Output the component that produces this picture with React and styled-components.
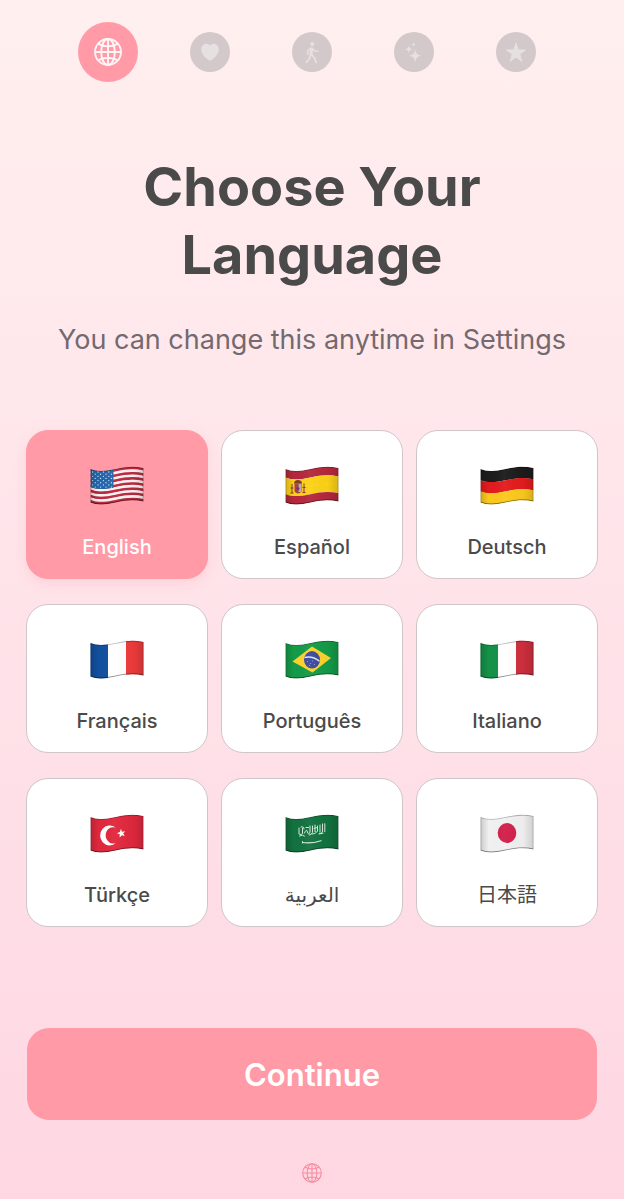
// App.jsx
import React, { useId, useState } from 'react';
import styled, { createGlobalStyle } from 'styled-components';

const GlobalStyle = createGlobalStyle`
  * {
    box-sizing: border-box;
  }

  body {
    margin: 0;
    font-family: Inter, 'Liberation Sans', 'DejaVu Sans', 'Noto Sans CJK JP', sans-serif;
    color: #4a4a4a;
  }

  button {
    font-family: inherit;
    cursor: pointer;
  }
`;

const Page = styled.main`
  min-height: 100vh;
  display: flex;
  flex-direction: column;
  padding-top: 22px;
  background: linear-gradient(180deg, #ffefef 0%, #fed7e3 100%);
`;

const Steps = styled.ol`
  display: flex;
  justify-content: center;
  gap: 42px;
  margin: 0;
  padding: 0;
  list-style: none;
`;

const Step = styled.li`
  width: 60px;
  height: 60px;
  display: flex;
  align-items: center;
  justify-content: center;
`;

const StepDot = styled.div`
  width: ${({ $active }) => ($active ? 60 : 40)}px;
  height: ${({ $active }) => ($active ? 60 : 40)}px;
  display: flex;
  align-items: center;
  justify-content: center;
  border-radius: 50%;
  background: ${({ $active }) => ($active ? '#ff9aa6' : '#d3c9ca')};
  color: ${({ $active }) => ($active ? '#fff5f6' : '#e6e0e2')};
`;

const Header = styled.header`
  padding: 0 48px;
  margin-top: 71px;
  text-align: center;
`;

const Title = styled.h1`
  max-width: 420px;
  margin: 0 auto;
  font-size: 54px;
  line-height: 68px;
  font-weight: 700;
`;

const Subtitle = styled.p`
  margin: 34px 0 0;
  font-size: 27px;
  line-height: 34px;
  color: #74696f;
`;

const Languages = styled.div`
  display: grid;
  grid-template-columns: repeat(3, 1fr);
  gap: 25px 13px;
  margin-top: 73px;
  padding: 0 26px;
`;

const LanguageCard = styled.button`
  height: 149px;
  display: flex;
  flex-direction: column;
  align-items: center;
  gap: 27px;
  padding: 35px 0 0;
  border: 1px solid ${({ $selected }) => ($selected ? '#ff9aa6' : '#d0c5c9')};
  border-radius: 22px;
  background: ${({ $selected }) => ($selected ? '#ff9aa6' : '#ffffff')};
  color: ${({ $selected }) => ($selected ? '#ffffff' : '#4a4a4a')};
  box-shadow: ${({ $selected }) => ($selected ? '0 4px 12px rgba(255, 154, 166, 0.25)' : 'none')};
`;

const LanguageName = styled.span`
  font-size: 20px;
  line-height: 28px;
  font-weight: 500;

  &:lang(ja) {
    font-weight: 400;
  }
`;

const Footer = styled.footer`
  display: flex;
  flex-direction: column;
  align-items: center;
  gap: 43px;
  margin-top: auto;
  padding: 48px 27px 16px;
`;

const ContinueButton = styled.button`
  width: 100%;
  height: 92px;
  border: none;
  border-radius: 22px;
  background: #ff9aa6;
  color: #ffffff;
  font-size: 31px;
  font-weight: 600;
`;

const PageMark = styled.div`
  display: flex;
  color: #f58c9e;
`;

const GlobeIcon = ({ size, stroke }) => (
  <svg width={size} height={size} viewBox="0 0 28 28" fill="none" stroke="currentColor" strokeWidth={stroke} aria-hidden="true">
    <circle cx="14" cy="14" r="13" />
    <ellipse cx="14" cy="14" rx="6.8" ry="13" />
    <path d="M14 1v26M1 14h26M4 5.600c5.600 3.600 14.400 3.600 20 0M4 22.400c5.600-3.600 14.400-3.600 20 0" />
  </svg>
);

const HeartIcon = () => (
  <svg width="40" height="40" viewBox="0 0 40 40" fill="currentColor" aria-hidden="true">
    <path d="M20 28.8c-.4 0-.8-.2-1.200-.5C14 25 11.200 21.300 11.200 17.300c0-3.300 2.200-5.600 5-5.600 1.700 0 3 .9 3.800 2.300.8-1.400 2.200-2.300 3.800-2.300 2.800 0 5 2.300 5 5.600 0 4-2.900 7.700-7.600 11-.4.300-.8.500-1.200.5z" />
  </svg>
);

const WalkIcon = () => (
  <svg width="40" height="40" viewBox="0 0 40 40" fill="none" stroke="currentColor" strokeLinecap="round" strokeLinejoin="round" aria-hidden="true">
    <circle cx="20.200" cy="12" r="2.100" fill="currentColor" stroke="none" />
    <path d="M19.600 17l-.6 5.600" strokeWidth="3.400" />
    <path d="M18.600 16.300l-2.500 2-.6 4M20.600 16.500l2.200 2.500 3.200.3" strokeWidth="1.400" />
    <path d="M18.500 23l-1 3.400-3 4M20 23l2.600 3.300 1.500 4.200" strokeWidth="1.700" />
  </svg>
);

const SparklesIcon = () => (
  <svg width="40" height="40" viewBox="0 0 40 40" fill="currentColor" aria-hidden="true">
    <path d="M21.200 17.300c.8 4.400 1.900 5.500 6.300 6.400-4.400.9-5.500 2-6.300 6.400-.8-4.400-1.900-5.500-6.300-6.400 4.400-.9 5.500-2 6.300-6.400z" />
    <path d="M14.800 13.500c.5 2.700 1.200 3.300 3.800 3.800-2.600.5-3.300 1.100-3.800 3.800-.5-2.700-1.200-3.300-3.800-3.800 2.600-.5 3.300-1.100 3.800-3.800z" />
    <path d="M19.500 10.100c.3 1.600.7 2 2.300 2.300-1.600.3-2 .7-2.300 2.300-.3-1.600-.7-2-2.300-2.300 1.600-.3 2-.7 2.300-2.300z" />
  </svg>
);

const StarIcon = () => (
  <svg width="40" height="40" viewBox="0 0 40 40" fill="currentColor" stroke="currentColor" strokeLinejoin="round" aria-hidden="true">
    <path d="M20 11l2.300 6.900 7.200.1-5.800 4.300 2.200 7-5.900-4.200-5.900 4.200 2.200-7-5.800-4.300 7.200-.1z" />
  </svg>
);

// the top and bottom edge of every flag follow the same wave
const band = (top, bottom) =>
  `M.5 ${top} c6 2.500 14 2.500 25 0 c11 -2.500 19 -3 28 -1 V${bottom - 1} c-9 -2 -17 -1.500 -28 1 c-11 2.500 -19 2.500 -25 0 Z`;

const TOP = 3;
const BOTTOM = 36.5;
const HEIGHT = BOTTOM - TOP;

const Rows = ({ colors }) => {
  const size = HEIGHT / colors.length;
  return colors.map((color, i) => (
    <path key={i} d={band(TOP + i * size, TOP + (i + 1) * size + 0.2)} fill={color} />
  ));
};

const Columns = ({ colors }) =>
  colors.map((color, i) => <rect key={color} x={i * 18} y="0" width="18.100" height="39" fill={color} />);

const stripes = Array.from({ length: 13 }, (_, i) => (i % 2 ? '#fbf3f4' : '#b92a40'));
const stars = Array.from({ length: 32 }, (_, i) => {
  const row = Math.floor(i / 4);
  return { x: 2.6 + (i % 4) * 5.4 + (row % 2) * 2.6, y: 6 + row * 2.150 };
});

const flagArt = {
  us: (
    <>
      <Rows colors={stripes} />
      <path d="M.5 3c6 2.500 13 2.500 23 .5v18.200c-10 2-17 1.800-23-.7z" fill="#2467ad" />
      {stars.map(({ x, y }) => (
        <circle key={`${x}-${y}`} cx={x} cy={y} r=".65" fill="#d4e7f7" />
      ))}
    </>
  ),
  es: (
    <>
      <Rows colors={['#b5283c', '#fcd116', '#fcd116', '#b5283c']} />
      <path d="M9.500 17.500h7v8q-3.500 4-7 0z" fill="#a9443d" />
      <path d="M14.800 18v8" stroke="#c9a7c4" strokeWidth="2.400" />
      <path d="M9 17.500q0-3.500 4-3.500t4 3.500z" fill="#7d4029" />
      <path d="M7 18v9M19 17.500v9" stroke="#a05c35" strokeWidth="1.300" />
      <path d="M5.500 22h3M5.500 27h3M17.500 21.500h3M17.500 26.500h3" stroke="#8d3038" strokeWidth="1.100" />
      <circle cx="13" cy="22.500" r="1.500" fill="#584280" />
    </>
  ),
  de: <Rows colors={['#1c1c1c', '#e31b1d', '#fbc91d']} />,
  fr: <Columns colors={['#12509e', '#ffffff', '#ee3b3c']} />,
  br: (
    <>
      <Rows colors={['#149b48']} />
      <path d="M7.500 21.500L27 6.500l19 11.500-18.500 14.500z" fill="#fcd22c" />
      <ellipse cx="27" cy="19.800" rx="8" ry="8.700" fill="#3c4a9c" />
      <path d="M19.400 17.500q8-2 15 3.700" fill="none" stroke="#dce6ec" strokeWidth="1.500" />
      <path d="M22 21.500h1M25 23.500h1M29 24.500h1M27 21h1M24 25.500h1" stroke="#a5afd8" strokeWidth=".8" />
    </>
  ),
  it: <Columns colors={['#149247', '#ffffff', '#cf2f3e']} />,
  tr: (
    <>
      <Rows colors={['#e0283d']} />
      <path d="M25.500 13.500a9.600 10 0 1 0 .5 15.500a7.600 8.200 0 1 1-.5-15.500z" fill="#ffffff" />
      <path d="M31 14.800l.9 3 3.300-.6-2 2.300 1.600 2.600-2.900-.9-2.300 2.400.1-3.300-2.900-1.100 3-1.300z" fill="#ffffff" />
    </>
  ),
  sa: (
    <>
      <Rows colors={['#12723f']} />
      <g fill="none" stroke="#d5e9dc" strokeWidth="1" strokeLinecap="round">
        <path d="M14 14v6q2 1.500 3.500-.5v-5M16 13q3-1 3 2M19.500 19q2-5 3-1t2.500 0v-6M21 13.500h2.500M27.500 12v6.500q-1 2-3 2.500M30 11v7q2 1 2.500-1v-5M35 11v7M37.500 10v8q-1.500 2-3 1.500M39.800 9.700v8M14.500 22q3-2 5 0M29 14.500l3-1M34 20l4-.8M27 20l3-.5" />
        <path d="M17.500 28.500q8 1.500 18.500-1.800" strokeWidth="1.200" />
        <path d="M17.500 27.500v1.600" />
      </g>
    </>
  ),
  jp: (
    <>
      <Rows colors={['#f1f1f2']} />
      <ellipse cx="27" cy="19" rx="9.300" ry="10" fill="#d21f4b" />
    </>
  ),
};

const Flag = ({ code }) => {
  const id = useId();
  const outline = band(TOP, BOTTOM);
  return (
    <svg width="54" height="40" viewBox="0 0 54 40" aria-hidden="true">
      <defs>
        <clipPath id={`${id}clip`}>
          <path d={outline} />
        </clipPath>
        <linearGradient id={`${id}shade`}>
          <stop offset="0" stopColor="#000" stopOpacity=".16" />
          <stop offset=".16" stopColor="#000" stopOpacity="0" />
          <stop offset=".45" stopColor="#fff" stopOpacity=".04" />
          <stop offset=".8" stopColor="#000" stopOpacity=".02" />
          <stop offset="1" stopColor="#000" stopOpacity=".14" />
        </linearGradient>
      </defs>
      <g clipPath={`url(#${id}clip)`}>
        {flagArt[code]}
        <path d={outline} fill={`url(#${id}shade)`} />
        <path d={outline} fill="none" stroke="#000" strokeOpacity=".26" strokeWidth="1.600" />
        <path d={band(BOTTOM - 0.9, BOTTOM)} fill="#000" fillOpacity=".25" />
      </g>
    </svg>
  );
};

const steps = [
  { name: 'language', icon: <GlobeIcon size={28} stroke={1.9} /> },
  { name: 'heart', icon: <HeartIcon /> },
  { name: 'walk', icon: <WalkIcon /> },
  { name: 'sparkles', icon: <SparklesIcon /> },
  { name: 'star', icon: <StarIcon /> },
];

const languages = [
  { code: 'us', lang: 'en', name: 'English' },
  { code: 'es', lang: 'es', name: 'Español' },
  { code: 'de', lang: 'de', name: 'Deutsch' },
  { code: 'fr', lang: 'fr', name: 'Français' },
  { code: 'br', lang: 'pt', name: 'Português' },
  { code: 'it', lang: 'it', name: 'Italiano' },
  { code: 'tr', lang: 'tr', name: 'Türkçe' },
  { code: 'sa', lang: 'ar', name: 'العربية' },
  { code: 'jp', lang: 'ja', name: '日本語' },
];

const App = () => {
  const [selected, setSelected] = useState('en');

  return (
    <>
      <GlobalStyle />
      <Page>
        <Steps>
          {steps.map(({ name, icon }, index) => (
            <Step key={name} aria-current={index === 0 ? 'step' : undefined}>
              <StepDot $active={index === 0}>{icon}</StepDot>
            </Step>
          ))}
        </Steps>

        <Header>
          <Title>Choose Your Language</Title>
          <Subtitle>You can change this anytime in Settings</Subtitle>
        </Header>

        <Languages>
          {languages.map(({ code, lang, name }) => (
            <LanguageCard
              key={lang}
              type="button"
              aria-pressed={selected === lang}
              $selected={selected === lang}
              onClick={() => setSelected(lang)}
            >
              <Flag code={code} />
              <LanguageName lang={lang}>{name}</LanguageName>
            </LanguageCard>
          ))}
        </Languages>

        <Footer>
          <ContinueButton type="button">Continue</ContinueButton>
          <PageMark>
            <GlobeIcon size={20} stroke={1.5} />
          </PageMark>
        </Footer>
      </Page>
    </>
  );
};

export default App;
